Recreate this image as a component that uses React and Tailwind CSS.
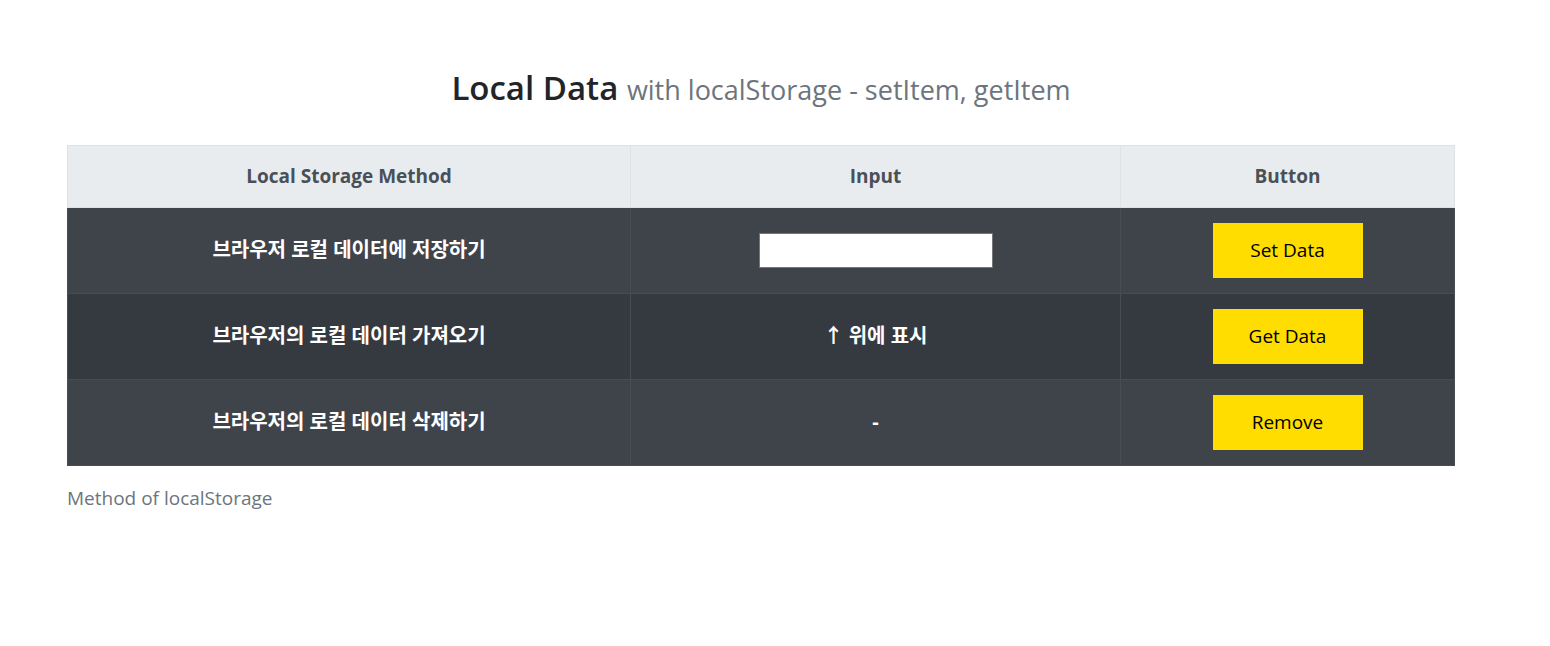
import React, { useState } from 'react';

const rows = [
  { label: '브라우저 로컬 데이터에 저장하기', kind: 'input', button: 'Set Data' },
  { label: '브라우저의 로컬 데이터 가져오기', kind: 'text', value: '↑ 위에 표시', button: 'Get Data' },
  { label: '브라우저의 로컬 데이터 삭제하기', kind: 'text', value: '-', button: 'Remove' },
];

export default function App() {
  const [value, setValue] = useState('');

  return (
    <div className="min-h-screen bg-white font-['Open_Sans','Noto_Sans_CJK_KR',sans-serif] text-[#212529]">
      <div className="ml-[67px] w-[1388px] pt-[68px]">
        <h1 className="text-center text-[33px] font-semibold leading-[1.2] mb-[37px]">
          Local Data{' '}
          <small className="text-[27px] font-normal text-[#6c757d]">with localStorage - setItem, getItem</small>
        </h1>

        <table className="w-full border-collapse table-fixed">
          <colgroup>
            <col className="w-[563px]" />
            <col className="w-[490px]" />
            <col />
          </colgroup>
          <thead>
            <tr className="h-[62px] bg-[#e9ecef] text-[#495057] text-[19px] font-semibold">
              <th className="border border-[#dee2e6]">Local Storage Method</th>
              <th className="border border-[#dee2e6]">Input</th>
              <th className="border border-[#dee2e6]">Button</th>
            </tr>
          </thead>
          <tbody>
            {rows.map((r, i) => (
              <tr key={i} className={`h-[86px] text-white ${i % 2 === 0 ? 'bg-[#3f444a]' : 'bg-[#343a40]'}`}>
                <td className="border border-[#454d55] text-center text-[20px] font-bold">{r.label}</td>
                <td className="border border-[#454d55] text-center text-[20px] font-bold">
                  {r.kind === 'input' ? (
                    <input
                      value={value}
                      onChange={(e) => setValue(e.target.value)}
                      className="w-[234px] h-[35px] bg-white border border-[#767676] text-black px-1 outline-none"
                    />
                  ) : (
                    r.value
                  )}
                </td>
                <td className="border border-[#454d55] text-center">
                  <button className="w-[150px] h-[55px] bg-[#ffdd00] text-black text-[19px]">{r.button}</button>
                </td>
              </tr>
            ))}
          </tbody>
        </table>
        <div className="pt-[18px] text-[19px] text-[#6c757d]">Method of localStorage</div>
      </div>
    </div>
  );
}
